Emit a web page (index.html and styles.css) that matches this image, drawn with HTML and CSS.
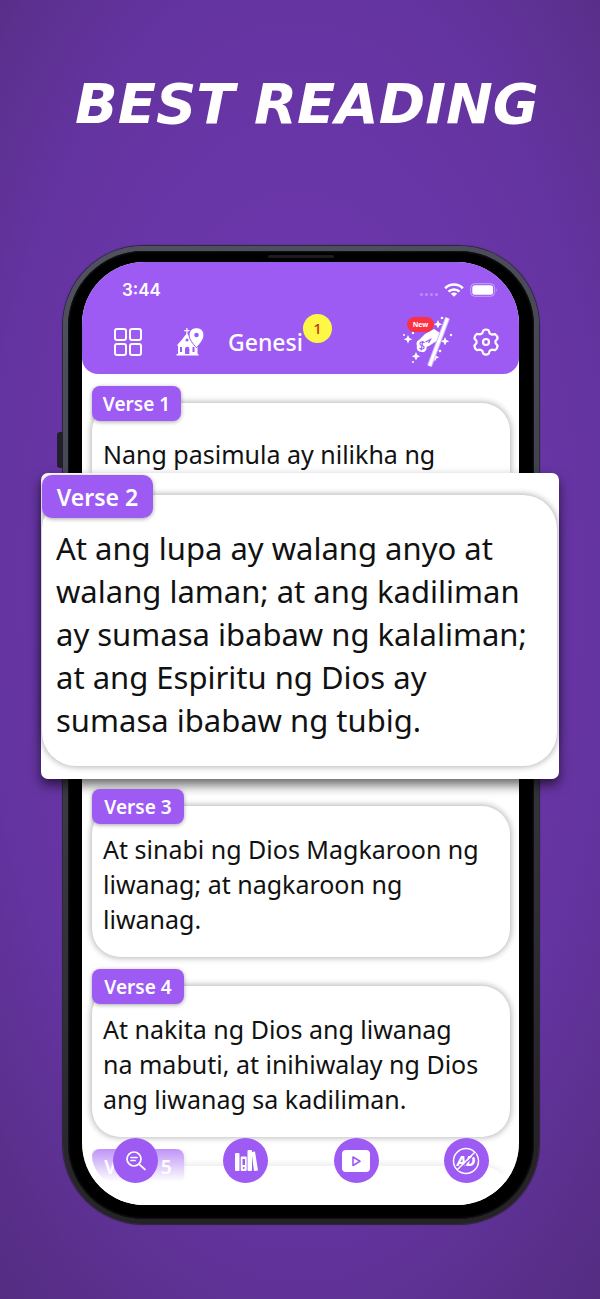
FILE: index.html
```html
<!DOCTYPE html>
<html lang="tl">
<head>
<meta charset="utf-8">
<meta name="viewport" content="width=device-width, initial-scale=1">
<title>Best Reading</title>
<link rel="stylesheet" href="styles.css">
</head>
<body>
<main class="promo">
  <h1 class="headline">BEST READING</h1>
  <div class="phone">
    <span class="speaker"></span>
    <span class="side-button"></span>
    <div class="screen">
      <header class="header">
        <div class="status">
          <span class="clock">3:44</span>
          <span class="dots"><i></i><i></i><i></i><i></i></span>
          <svg class="wifi" viewBox="0 0 20 14" aria-hidden="true"><g fill="none" stroke="#fff" stroke-width="2.6"><path d="M1.2 5.2C6.2.3 13.8.3 18.8 5.2"/><path d="M4.5 8.6c3-2.9 8-2.9 11 0"/></g><path fill="#fff" d="M10 13.8 6.9 10.7c1.800-1.500 4.400-1.500 6.200 0z"/></svg>
          <svg class="battery" viewBox="0 0 28 14" aria-hidden="true"><rect x=".7" y=".7" width="24" height="12.600" rx="4" fill="none" stroke="#c9a4fa"/><rect x="2.300" y="2.300" width="20.800" height="9.400" rx="2.500" fill="#fff"/><path d="M26.200 5q1.400 2 0 4z" fill="#c9a4fa"/></svg>
        </div>
        <div class="toolbar">
          <button class="icon" aria-label="Menu"><svg width="28" height="28" viewBox="0 0 28 28" fill="none" stroke="#fff" stroke-width="2"><rect x="1" y="1" width="11" height="11" rx="2"/><rect x="16" y="1" width="11" height="11" rx="2"/><rect x="1" y="16" width="11" height="11" rx="2"/><rect x="16" y="16" width="11" height="11" rx="2"/></svg></button>
          <button class="icon church" aria-label="Churches"><svg width="28" height="28" viewBox="0 0 28 28"><g fill="#fff"><path d="M10.300 0h1.200v2h2v1.200h-2V6l3.500 4.500V13l6.500 4v9h1v1.500H.5V26H2v-8.500H.7L6.500 11l1-1.500L10.300 6V3.200h-2V2h2z"/><path stroke="#9d5bf3" stroke-width="1" d="M20.500-.3c4.300 0 7.400 3.100 7.400 7.200 0 4.800-3.900 8.800-7.400 12.800-3.500-4-7.400-8-7.400-12.800 0-4.100 3.100-7.200 7.400-7.200z"/></g><g fill="#9d5bf3"><circle cx="20.500" cy="7" r="2.300"/><path d="M9 26v-5a2.200 2.200 0 0 1 4.400 0v5zM4 19h2v5H4zM16.500 19h2v5h-2z"/><circle cx="11" cy="12" r="1.500"/></g></svg></button>
          <h2 class="book">Genesi<span class="chapter">1</span></h2>
          <button class="icon donate" aria-label="Donate"><svg width="52" height="54" viewBox="0 0 52 54"><g fill="#fff"><path d="M6 20l1.300 3 3 1.300-3 1.300L6 28.600l-1.300-3-3-1.300 3-1.300zM14 37l1.300 3 3 1.300-3 1.300L14 45.600l-1.300-3-3-1.300 3-1.300zM43 22l1.300 3 3 1.300-3 1.300L43 30.600l-1.300-3-3-1.300 3-1.300zM36 5l1.300 3 3 1.300-3 1.300L36 13.600l-1.300-3-3-1.300 3-1.300zM33 38l1.300 3 3 1.300-3 1.300L33 46.600l-1.300-3-3-1.300 3-1.300z"/><circle cx="11" cy="18" r="1.200"/><circle cx="2" cy="20" r="1"/><circle cx="40" cy="3" r="1.300"/><circle cx="49" cy="20" r="1.200"/><circle cx="11" cy="47" r="1"/><circle cx="38" cy="36" r="1.300"/><path d="M15 27l8-8 9-5 6 4-2 7-9 6-6 2 2-5-3-2z"/><path d="M15.500 26c4-3 9 0 8.500 4 2 4-1 8-4 7-4 0-6-3-5-6-1-2-.5-4 .5-5z"/></g><path d="M22.500 28c-2-2.500-6-.5-4 1.800 1 1 3 .5 3.500 2 .5 2.500-2.500 3-4.500 1.200M20.700 26l-1.500 9.500M23.500 27l5-2.500-2 3.500" fill="none" stroke="#9d5bf3" stroke-width="1.200"/><path d="M45.500 3 27.500 51" stroke="#d8bcff" stroke-width="5"/><path d="M45.500 3 27.500 51" stroke="#fff" stroke-width="3"/></svg><span class="new">New</span></button>
          <button class="icon" aria-label="Settings"><svg width="28" height="28" viewBox="0 0 28 28" fill="none" stroke="#fff" stroke-width="2.200" stroke-linejoin="round"><path d="M11.400 2.400q2.600-1.800 5.200 0l1.200 3.100 2 1.100 3.300-.5q2.400 1.600 2.500 4.500L23.500 13v2l2.100 2.600q-.1 2.900-2.500 4.500l-3.300-.5-2 1.100-1.200 3.100q-2.600 1.500-5.200 0l-1.200-3.100-2-1.100-3.300.5q-2.400-1.600-2.500-4.500L4.500 15v-2l-2.100-2.600q.1-2.900 2.500-4.500l3.300.5 2-1.100z"/><circle cx="14" cy="14" r="3"/></svg></button>
        </div>
      </header>
      <ol class="verses">
        <li class="verse first"><h3 class="tag">Verse 1</h3><p class="text">Nang pasimula ay nilikha ng</p></li>
        <li class="spotlight"><h3 class="tag">Verse 2</h3><p class="text">At ang lupa ay walang anyo at<br>walang laman; at ang kadiliman<br>ay sumasa ibabaw ng kalaliman;<br>at ang Espiritu ng Dios ay<br>sumasa ibabaw ng tubig.</p></li>
        <li class="verse"><h3 class="tag">Verse 3</h3><p class="text">At sinabi ng Dios Magkaroon ng<br>liwanag; at nagkaroon ng<br>liwanag.</p></li>
        <li class="verse"><h3 class="tag">Verse 4</h3><p class="text">At nakita ng Dios ang liwanag<br>na mabuti, at inihiwalay ng Dios<br>ang liwanag sa kadiliman.</p></li>
        <li class="verse last"><h3 class="tag">Verse 5</h3><p class="text"></p></li>
      </ol>
      <nav class="nav">
        <button class="round" aria-label="Search"><svg width="22" height="22" viewBox="0 0 22 22" fill="none" stroke="#fff" stroke-width="1.700" stroke-linecap="round"><circle cx="9" cy="9" r="7"/><path d="M14.300 14.300l5.700 5.200M6 7.500h6M6 10.500h4"/></svg></button>
        <button class="round" aria-label="Library"><svg width="24" height="22" viewBox="0 0 24 22"><g fill="#fff"><rect x="1" y="3" width="4.500" height="18" rx="1"/><rect x="6.700" y="6.500" width="6" height="14.500" rx="1"/><rect x="13.500" y="0" width="4.500" height="21" rx="1"/><path d="M17.500 2l3.500-.5L24 20.500l-4 .6z"/></g><g fill="#9d5bf3"><rect x="8.500" y="9" width="2.500" height="6"/><circle cx="9.700" cy="18" r="1"/></g></svg></button>
        <button class="round" aria-label="Videos"><svg width="28" height="22" viewBox="0 0 28 22"><rect width="28" height="22" rx="4" fill="#fff"/><path d="M11 7v8.500l7-4.200z" fill="none" stroke="#9d5bf3" stroke-width="1.600" stroke-linejoin="round"/></svg></button>
        <button class="round" aria-label="Remove ads"><svg width="28" height="28" viewBox="0 0 28 28"><circle cx="14" cy="14" r="12.500" fill="none" stroke="#fff" stroke-width="1.500"/><text class="ad" x="14" y="19" text-anchor="middle">AD</text><path d="M6.500 23.500 24 6.500" stroke="#9d5bf3" stroke-width="1.300"/><path d="M5 23 23 5" stroke="#fff" stroke-width="1.500"/></svg></button>
      </nav>
    </div>
  </div>
</main>
</body>
</html>
```
FILE: styles.css
```css
* { box-sizing: border-box; margin: 0; padding: 0; }
body { font-family: "Noto Sans", sans-serif; background: #4b286f; color: #111; }
button { border: 0; background: none; color: inherit; font: inherit; display: flex; }
svg { display: block; overflow: visible; }

.promo {
  min-height: 100vh;
  padding: 64px 61px 75px 63px;
  background: radial-gradient(ellipse 92% 85% at 50% 45%, #7239b6, #6434a0 56%, #4b286f);
}
.headline {
  height: 80px;
  margin-bottom: 102px;
  padding-left: 12px;
  color: #fff;
  font-family: "DejaVu Sans", sans-serif;
  font-size: 56px;
  font-weight: 700;
  font-style: italic;
  line-height: 80px;
  white-space: nowrap;
}

.phone {
  position: relative;
  max-width: 477px;
  margin: 0 auto;
  padding: 11px 15px 14px 14px;
  border: 5px solid transparent;
  border-radius: 80px;
  background:
    linear-gradient(#000, #000) padding-box,
    linear-gradient(165deg, #50535f, #3b3d46 45%, #252326 90%) border-box;
  box-shadow: inset 0 0 2px 1px #15151a, 0 0 1px 1px #2a2535;
}
.speaker { position: absolute; top: 4px; left: 200px; width: 66px; height: 3px; border-radius: 2px; background: #1d1b1d; }
.side-button { position: absolute; top: 181px; left: -11px; width: 6px; height: 36px; border-radius: 3px 0 0 3px; background: #20202b; }
.screen { position: relative; border-radius: 62px; background: #fff; }

.header {
  height: 112px;
  padding: 14px 19px 0 32px;
  border-radius: 62px 62px 16px 16px;
  background: #9d5bf3;
  color: #fff;
}
.status { display: flex; align-items: center; height: 28px; padding: 0 2px 0 8px; }
.clock { flex: 1; font: 600 17px/28px Inter, sans-serif; }
.dots { display: flex; gap: 2px; margin: 8px 6px 0 0; }
.dots i { width: 3px; height: 3px; border-radius: 50%; background: #bd8ff8; }
.wifi { width: 20px; height: 14px; margin-right: 6px; }
.battery { width: 28px; height: 14px; }
.toolbar { display: flex; align-items: center; height: 54px; margin-top: 11px; }
.icon { position: relative; flex: none; }
.church { margin-left: 34px; }
.book { position: relative; flex: 1; margin-left: 24px; font-size: 23px; font-weight: 500; line-height: 32px; }
.chapter {
  position: absolute; top: -12px; left: 75px;
  width: 29px; height: 29px; border-radius: 50%;
  background: #fdf843; color: #c2331f;
  font-size: 15px; line-height: 29px; text-align: center;
}
.donate { margin-right: 18px; }
.new {
  position: absolute; top: 2px; left: 5px;
  width: 27px; height: 15px; border-radius: 8px;
  background: #fb3243; font-size: 7px; font-weight: 700; line-height: 15px; text-align: center;
}

.verses { list-style: none; padding: 12px 9px 20px 10px; }
.tag {
  position: relative;
  width: 92px; height: 35px; margin-bottom: -18px;
  border-radius: 8px;
  background: #9d5bf3; color: #fff;
  font-size: 19px; font-weight: 600; line-height: 37px; text-align: center;
  box-shadow: 0 1px 4px rgba(0, 0, 0, .35);
}
.text {
  padding: 26px 11px 20px;
  border-radius: 28px;
  background: #fff;
  font-size: 25px; line-height: 35px; white-space: nowrap;
  box-shadow: 0 0 6px 1px rgba(0, 0, 0, .3);
}
.verse { padding-bottom: 12px; }
.first { padding-bottom: 0; }
.first .tag { width: 89px; }
.first .text { padding: 34px 11px 1px; border-radius: 28px 28px 0 0; }
.spotlight {
  position: relative;
  margin: 0 -49px 10px -51px;
  padding: 2px 2px 13px 1px;
  border-radius: 7px;
  background: #fff;
  box-shadow: 0 6px 12px rgba(0, 0, 0, .6);
}
.spotlight .tag { width: 111px; height: 43px; margin-bottom: -23px; border-radius: 10px; font-size: 23px; line-height: 45px; }
.spotlight .text { padding: 32px 14px 24px; border-radius: 34px; font-size: 31px; line-height: 43px; }
.last { height: 36px; padding: 0; overflow: hidden; border-radius: 0 0 30px 30px; }
.last .text { height: 56px; }

.nav {
  position: absolute; right: 0; bottom: 0; left: 0;
  display: flex; justify-content: space-between;
  height: 68px; padding: 1px 30px 0 31px;
  border-radius: 0 0 62px 62px;
  background: linear-gradient(rgba(255, 255, 255, .1), #fff 66%);
}
.round { width: 45px; height: 45px; align-items: center; justify-content: center; border-radius: 50%; background: #9d5bf3; }
.ad { fill: #fff; font-size: 14px; font-weight: 800; font-style: italic; }
```
